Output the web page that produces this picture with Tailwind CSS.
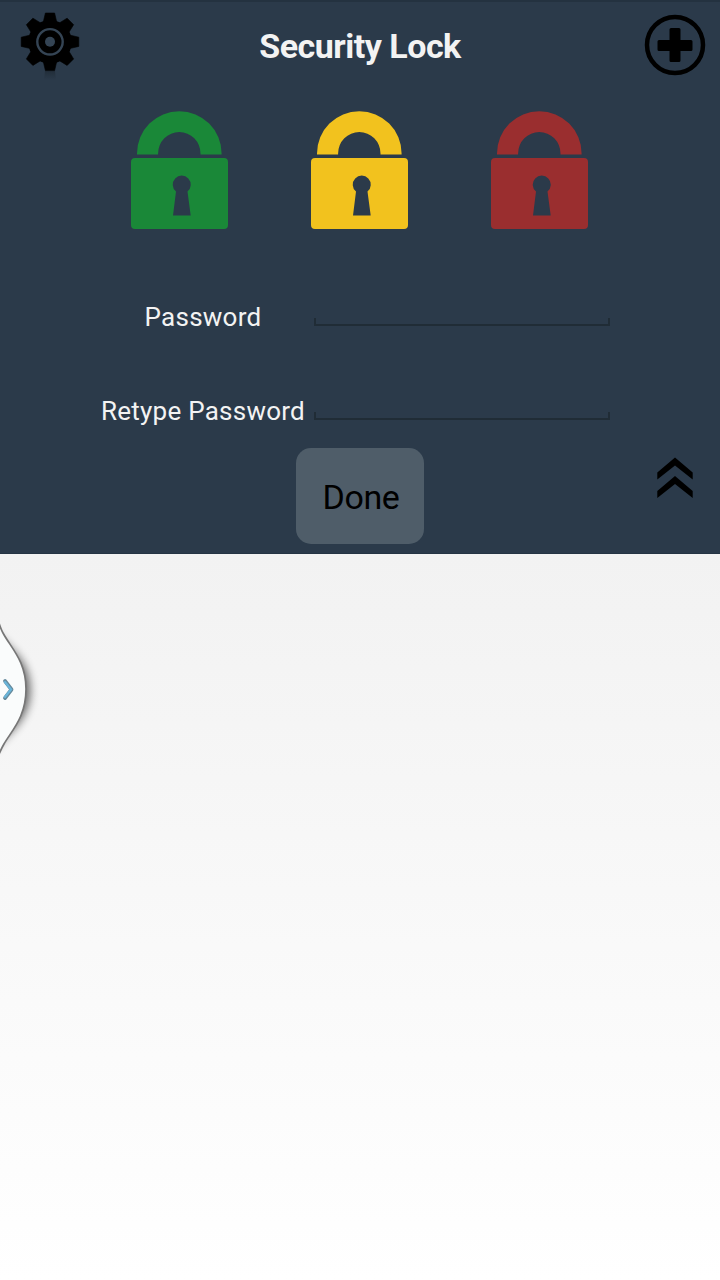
<!DOCTYPE html>
<html lang="en">
<head>
<meta charset="utf-8">
<title>Security Lock</title>
<script src="https://cdn.jsdelivr.net/npm/@tailwindcss/browser@4"></script>
</head>
<body class="h-[1280px] w-[720px] overflow-hidden bg-white font-[Roboto,sans-serif]">
<svg class="hidden">
  <symbol id="lock" viewBox="0 0 98 120">
    <path d="M6 44.500V43.500a42.300 42.300 0 0 1 84.600 0v1H69.500V43.500a21.200 21.500 0 0 0-42.400 0v1Z"/>
    <path fill-rule="evenodd" d="M4 48H93a4 4 0 0 1 4 4V115a4 4 0 0 1-4 4H4a4 4 0 0 1-4-4V52a4 4 0 0 1 4-4ZM45 81.500L42 105.500H59.700L56.500 81.500A9 9 0 1 0 45 81.500Z"/>
  </symbol>
</svg>
<main class="flex h-full flex-col">
  <section class="flex h-[554px] shrink-0 flex-col bg-[#2b3a4a] shadow-[inset_0_2px_0_#243240,inset_0_-1px_0_#253443]">
    <header class="flex h-[110px] items-start justify-between pl-5 pr-[14px] pt-3">
      <svg class="h-[70px] w-[60px]" viewBox="0 0 60 70">
        <defs>
          <linearGradient id="reflect" x1="0" y1="0" x2="0" y2="1"><stop offset="0" stop-color="#000" stop-opacity=".22"/><stop offset="1" stop-color="#000" stop-opacity="0"/></linearGradient>
          <path id="tooth" d="M-4.600-28.800H4.600L6.800-19.500H-6.800Z" stroke="#000" stroke-width=".6" stroke-linejoin="round"/>
        </defs>
        <path d="M25 59h10l1 9H24Z" fill="url(#reflect)"/>
        <g transform="translate(30 29.800)">
          <circle r="21.800"/>
          <use href="#tooth"/><use href="#tooth" transform="rotate(45)"/><use href="#tooth" transform="rotate(90)"/><use href="#tooth" transform="rotate(135)"/><use href="#tooth" transform="rotate(180)"/><use href="#tooth" transform="rotate(225)"/><use href="#tooth" transform="rotate(270)"/><use href="#tooth" transform="rotate(315)"/>
          <circle r="12.700" fill="none" stroke="#344454" stroke-width="2.400"/>
          <circle r="5" fill="#344454"/>
        </g>
      </svg>
      <h1 class="mr-1 mt-[14px] whitespace-nowrap text-[34px] font-bold leading-10 tracking-[-0.5px] text-[#f3f3f3]">Security Lock</h1>
      <svg class="mt-[2px] h-[62px] w-[62px]" viewBox="0 0 62 62">
        <circle cx="31" cy="31" r="28" fill="none" stroke="#000" stroke-width="4.500"/>
        <path d="M27 14h8a1.500 1.500 0 0 1 1.500 1.500V26H47a1.500 1.500 0 0 1 1.500 1.500v8A1.500 1.500 0 0 1 47 37H36.500v9.500A1.500 1.500 0 0 1 35 48h-8a1.500 1.500 0 0 1-1.500-1.500V37H15a1.500 1.500 0 0 1-1.500-1.500v-8A1.500 1.500 0 0 1 15 26h10.500V15.500A1.500 1.500 0 0 1 27 14Z"/>
      </svg>
    </header>
    <div class="flex h-[120px] justify-center gap-[82px]">
      <svg class="h-[120px] w-[98px] fill-[#1a8838]"><use href="#lock"/></svg>
      <svg class="h-[120px] w-[98px] fill-[#f2c21e]"><use href="#lock"/></svg>
      <svg class="h-[120px] w-[98px] fill-[#9a2e2f]"><use href="#lock"/></svg>
    </div>
    <form class="flex flex-col">
      <div class="mt-[70px] flex h-[34px] pl-[92px]">
        <label class="w-[222px] text-center text-[26px] leading-[34px] tracking-[0.25px] text-[#f3f3f3]">Password</label>
        <span class="mt-[18px] h-2 w-[296px] border-x-2 border-b-2 border-[#202c36]"></span>
      </div>
      <div class="mt-[60px] flex h-[34px] pl-[92px]">
        <label class="w-[222px] text-center text-[26px] leading-[34px] tracking-[0.25px] text-[#f3f3f3]">Retype Password</label>
        <span class="mt-[18px] h-2 w-[296px] border-x-2 border-b-2 border-[#202c36]"></span>
      </div>
      <div class="mt-5 flex justify-between pl-[296px] pr-[26px]">
        <button type="button" class="h-24 w-32 rounded-[15px] bg-[#4f5d69] pb-px pl-0.5 pt-[3px] text-[34px] tracking-[-0.4px] text-black">Done</button>
        <svg class="mt-[9px] h-[42px] w-[38px]" viewBox="0 0 38 42"><path d="M1.300 15.500L19 .5 36.700 15.500v7L19 8.500 1.300 22.500ZM1.300 34L19 19 36.700 34V41L19 27 1.300 41Z"/></svg>
      </div>
    </form>
  </section>
  <section class="flex-1 bg-linear-to-b from-[#f2f2f2] to-white pt-[56px]">
    <svg class="h-[160px] w-[60px]" viewBox="0 0 60 160">
      <defs>
        <filter id="soft" x="-100%" y="-30%" width="300%" height="160%"><feGaussianBlur stdDeviation="5"/></filter>
      </defs>
      <path d="M-8 20C2 34 30 46 30 80S2 126-8 142Z" fill="#000" opacity=".6" filter="url(#soft)"/>
      <path d="M-4 5C-1 12 0 18 3 23C11 38 26 51 26 79S12 120 4 134C1 139-1 144-4 151Z" fill="#fafcfc" stroke="#777" stroke-width="1.700"/>
      <path d="M5 71L11.500 79.500 5 88" fill="none" stroke="#668a9c" stroke-width="3.800" stroke-linecap="round" stroke-linejoin="round"/>
      <path d="M5 72L11 79.500 5 87" fill="none" stroke="#69b5da" stroke-width="2.200" stroke-linecap="round"/>
    </svg>
  </section>
</main>
</body>
</html>
